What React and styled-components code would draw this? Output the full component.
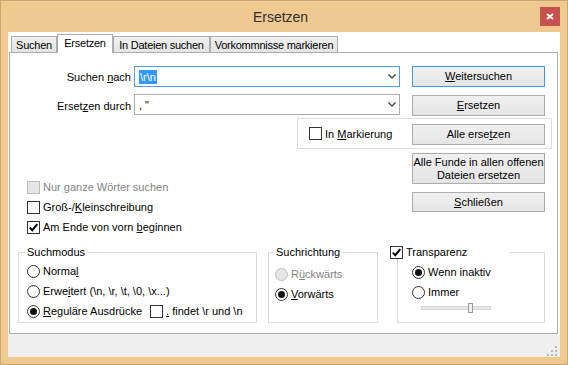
import React from "react";
import styled, { createGlobalStyle } from "styled-components";

const GlobalStyle = createGlobalStyle`
  * { box-sizing: border-box; }
  html, body { margin: 0; padding: 0; background: #ffffff; }
  body {
    font-family: "Liberation Sans", Arial, sans-serif;
    font-size: 11px;
    line-height: 14px;
    color: #000;
  }
`;

function Check({ checked, disabled, children, indent }) {
  return (
    <Option $disabled={disabled} $ml={indent}>
      <CheckBox $disabled={disabled}>
        {checked && (
          <svg width="11" height="11" viewBox="0 0 11 11">
            <path d="M1.8 5.6 L4.3 8.2 L9.3 2.2" fill="none" stroke="#000" strokeWidth="2" />
          </svg>
        )}
      </CheckBox>
      <span>{children}</span>
    </Option>
  );
}

function Radio({ checked, disabled, children }) {
  return (
    <Option $disabled={disabled}>
      <RadioCircle $disabled={disabled}>{checked && <Dot />}</RadioCircle>
      <span>{children}</span>
    </Option>
  );
}

function Chevron() {
  return (
    <ChevronIcon width="8" height="5" viewBox="0 0 8 5">
      <path d="M0.5 0.5 L4 4 L7.5 0.5" fill="none" stroke="#444" strokeWidth="1.4" />
    </ChevronIcon>
  );
}

export default function App() {
  return (
    <>
      <GlobalStyle />
      <Window>
        <TitleBar>
          <span />
          <Title>Ersetzen</Title>
          <CloseButton>
            <svg width="8" height="7" viewBox="0 0 8 7">
              <path d="M1 1 L7 6 M7 1 L1 6" stroke="#fff" strokeWidth="1.8" />
            </svg>
          </CloseButton>
        </TitleBar>
        <Client>
          <TabControl>
            <TabRow>
              <Tab $w={46}>Suchen</Tab>
              <Tab $w={56} $active>Ersetzen</Tab>
              <Tab $w={97}>In Dateien suchen</Tab>
              <Tab $w={128}>Vorkommnisse markieren</Tab>
            </TabRow>
            <Panel>
              <Form>
                <FieldLabel $row={1}>
                  Suchen <U>n</U>ach
                </FieldLabel>
                <Combo $row={1} $focused>
                  <Selected>{"\\r\\n"}</Selected>
                  <Chevron />
                </Combo>
                <FieldLabel $row={2}>
                  Erset<U>z</U>en durch
                </FieldLabel>
                <Combo $row={2}>
                  <span>, "</span>
                  <Chevron />
                </Combo>

                <MarkBox>
                  <Check>
                    In <U>M</U>arkierung
                  </Check>
                </MarkBox>

                <Checks>
                  <Check disabled>
                    Nur <U>g</U>anze Wörter suchen
                  </Check>
                  <Check>
                    Groß-/<U>K</U>leinschreibung
                  </Check>
                  <Check checked>
                    Am Ende von vorn <U>b</U>eginnen
                  </Check>
                </Checks>

                <Button $row={1} $default>
                  <U>W</U>eitersuchen
                </Button>
                <Button $row={2}>
                  <U>E</U>rsetzen
                </Button>
                <Button $row={3}>
                  Alle erse<U>t</U>zen
                </Button>
                <Button $row={4}>
                  Alle Funde in allen offenen
                  <br />
                  Dateien ersetzen
                </Button>
                <Button $row={5}>
                  <U>S</U>chließen
                </Button>
              </Form>

              <GroupRow>
                <Group $w={239} $pl={8}>
                  <GroupTitle $ml={-2}>Suchmodus</GroupTitle>
                  <Items $pt={2}>
                    <Radio>
                      Norma<U>l</U>
                    </Radio>
                    <Radio>
                      Erwe<U>i</U>tert {"(\\n, \\r, \\t, \\0, \\x...)"}
                    </Radio>
                    <OptionRow>
                      <Radio checked>
                        <U>R</U>eguläre Ausdrücke
                      </Radio>
                      <Check indent={8}>
                        <U>.</U> {"findet \\r und \\n"}
                      </Check>
                    </OptionRow>
                  </Items>
                </Group>

                <Group $w={110} $ml={11} $pl={6}>
                  <GroupTitle $ml={-1}>Suchrichtung</GroupTitle>
                  <Items $pt={5}>
                    <Radio disabled>
                      R<U>ü</U>ckwärts
                    </Radio>
                    <Radio checked>
                      <U>V</U>orwärts
                    </Radio>
                  </Items>
                </Group>

                <Group $w={148} $ml={19} $pl={14}>
                  <GroupTitle $ml={-24} $pr={42}>
                    <Check checked>Transparenz</Check>
                  </GroupTitle>
                  <Items $pt={3}>
                    <Radio checked>Wenn inaktiv</Radio>
                    <Radio>Immer</Radio>
                    <Slider>
                      <Track>
                        <Thumb />
                      </Track>
                    </Slider>
                  </Items>
                </Group>
              </GroupRow>
            </Panel>
          </TabControl>
          <StatusBand>
            <svg width="10" height="10" viewBox="0 0 10 10">
              <g fill="#b8b8b8">
                <rect x="8" y="0" width="2" height="2" />
                <rect x="4" y="4" width="2" height="2" />
                <rect x="8" y="4" width="2" height="2" />
                <rect x="0" y="8" width="2" height="2" />
                <rect x="4" y="8" width="2" height="2" />
                <rect x="8" y="8" width="2" height="2" />
              </g>
            </svg>
          </StatusBand>
        </Client>
      </Window>
    </>
  );
}

const Window = styled.div`
  width: 568px;
  height: 365px;
  background: #f0c991;
  border: 1px solid #c8a676;
  display: flex;
  flex-direction: column;
`;

const TitleBar = styled.div`
  height: 31px;
  display: grid;
  grid-template-columns: 1fr auto 1fr;
  align-items: start;
  padding-right: 7px;
`;

const Title = styled.div`
  padding-top: 8px;
  font-size: 14px;
  line-height: 17px;
  color: #2e2e2e;
`;

const CloseButton = styled.div`
  justify-self: end;
  margin-top: 6px;
  width: 20px;
  height: 19px;
  background: #c75050;
  display: flex;
  align-items: center;
  justify-content: center;
`;

const Client = styled.div`
  flex: 1;
  margin: 0 7px 7px;
  background: #ffffff;
  display: flex;
  flex-direction: column;
`;

const TabControl = styled.div`
  margin: 0 2px 0 1px;
  display: flex;
  flex-direction: column;
`;

const TabRow = styled.div`
  height: 20px;
  display: flex;
  align-items: flex-end;
  padding-left: 2px;
  position: relative;
  z-index: 1;
`;

const Tab = styled.div`
  width: ${(p) => p.$w}px;
  height: ${(p) => (p.$active ? 19 : 16)}px;
  margin-bottom: ${(p) => (p.$active ? -1 : 0)}px;
  padding-bottom: ${(p) => (p.$active ? 3 : 0)}px;
  border: 1px solid #acacac;
  border-bottom: none;
  background: ${(p) => (p.$active ? "#ffffff" : "linear-gradient(#f0f0f0, #e5e5e5)")};
  display: flex;
  align-items: center;
  justify-content: center;
  white-space: nowrap;
  letter-spacing: -0.25px;
`;

const Panel = styled.div`
  height: 282px;
  border: 1px solid #acacac;
`;

const Form = styled.div`
  display: grid;
  grid-template-columns: 121px 3px 163px 103px 12px 133px 7px;
  grid-template-rows: 21px 21px 21px 31px 20px;
  row-gap: 8px;
  margin-top: 13px;
`;

const FieldLabel = styled.div`
  grid-column: 1;
  grid-row: ${(p) => p.$row};
  justify-self: end;
  align-self: center;
  white-space: nowrap;
`;

const Combo = styled.div`
  grid-column: 3 / 5;
  grid-row: ${(p) => p.$row};
  margin-top: ${(p) => (p.$row === 2 ? -1 : 0)}px;
  height: 21px;
  border: 1px solid ${(p) => (p.$focused ? "#569de5" : "#acacac")};
  background: #ffffff;
  display: flex;
  align-items: center;
  padding: 0 3px 0 4px;
  white-space: pre;
`;

const ChevronIcon = styled.svg`
  margin-left: auto;
`;

const Selected = styled.span`
  background: #3399ff;
  color: #ffffff;
  padding: 0 1px;
`;

const MarkBox = styled.div`
  grid-column: 4 / 8;
  grid-row: 2 / 4;
  align-self: start;
  margin-top: 23px;
  height: 31px;
  border: 1px solid #dcdcdc;
  padding-left: 11px;
  display: flex;
  align-items: center;
`;

const Checks = styled.div`
  grid-column: 1 / 5;
  grid-row: 4 / 6;
  align-self: start;
  margin: 24px 0 0 17px;
  display: flex;
  flex-direction: column;
`;

const Button = styled.button`
  grid-column: 6;
  grid-row: ${(p) => p.$row};
  font: inherit;
  line-height: 13px;
  color: #000;
  padding: 0;
  margin: 0;
  border: 1px solid ${(p) => (p.$default ? "#3c9be8" : "#acacac")};
  background: linear-gradient(#f0f0f0, #e5e5e5);
  text-align: center;
`;

const U = styled.span`
  text-decoration: underline;
  text-underline-offset: 1px;
`;

const Option = styled.div`
  height: 20px;
  margin-left: ${(p) => p.$ml || 0}px;
  display: flex;
  align-items: center;
  gap: 3px;
  white-space: pre;
  color: ${(p) => (p.$disabled ? "#838383" : "#000")};
`;

const OptionRow = styled.div`
  display: flex;
  align-items: center;
`;

const CheckBox = styled.span`
  width: 13px;
  height: 13px;
  flex: none;
  border: 1px solid ${(p) => (p.$disabled ? "#bcbcbc" : "#333333")};
  background: ${(p) => (p.$disabled ? "#e6e6e6" : "#ffffff")};
  display: flex;
  align-items: center;
  justify-content: center;
`;

const RadioCircle = styled.span`
  width: 13px;
  height: 13px;
  flex: none;
  border-radius: 50%;
  border: 1px solid ${(p) => (p.$disabled ? "#bcbcbc" : "#333333")};
  background: ${(p) => (p.$disabled ? "#e6e6e6" : "#ffffff")};
  display: flex;
  align-items: center;
  justify-content: center;
`;

const Dot = styled.span`
  width: 7px;
  height: 7px;
  border-radius: 50%;
  background: #111;
`;

const GroupRow = styled.div`
  display: flex;
  margin: 40px 0 0 8px;
`;

const Group = styled.div`
  width: ${(p) => p.$w}px;
  height: 71px;
  margin-left: ${(p) => p.$ml || 0}px;
  padding-left: ${(p) => p.$pl}px;
  border: 1px solid #dcdcdc;
  display: flex;
  flex-direction: column;
`;

const GroupTitle = styled.div`
  align-self: flex-start;
  margin: -8px 0 0 ${(p) => p.$ml}px;
  padding: 0 ${(p) => p.$pr || 2}px 0 2px;
  height: 14px;
  display: flex;
  align-items: center;
  background: #ffffff;
  white-space: nowrap;
`;

const Items = styled.div`
  padding-top: ${(p) => p.$pt}px;
  display: flex;
  flex-direction: column;
`;

const Slider = styled.div`
  height: 10px;
  margin: 1px 0 0 9px;
  display: flex;
  align-items: center;
`;

const Track = styled.div`
  position: relative;
  width: 70px;
  height: 4px;
  background: #e7e7e7;
  border: 1px solid #d6d6d6;
`;

const Thumb = styled.div`
  position: absolute;
  left: 46px;
  top: -4px;
  width: 5px;
  height: 10px;
  background: #f0f0f0;
  border: 1px solid #9a9a9a;
`;

const StatusBand = styled.div`
  flex: 1;
  background: #f0f0f0;
  display: flex;
  justify-content: flex-end;
  align-items: flex-end;
  padding: 0 3px 1px 0;
`;
